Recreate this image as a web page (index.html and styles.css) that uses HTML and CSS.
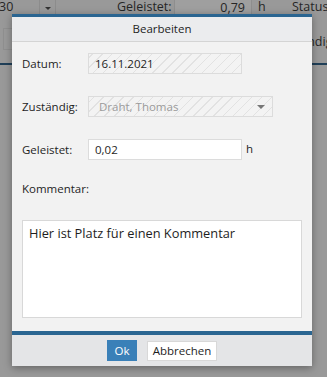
FILE: index.html
```html
<!DOCTYPE html>
<html lang="de">
<head>
    <meta charset="UTF-8">
    <title>Bearbeiten</title>
    <link rel="stylesheet" href="styles.css">
</head>
<body>
<div class="page">
    <div class="page-row">
        <span class="page-num">30</span>
        <span class="page-drop"><span class="page-arrow"></span></span>
        <span class="page-label">Geleistet:</span>
        <span class="page-input">0,79</span>
        <span class="page-unit">h</span>
        <span class="page-status">Status:</span>
    </div>
    <div class="page-row second">
        <span class="page-hatch"></span>
        <span class="page-rest">Zuständig</span>
    </div>
    <div class="page-line"></div>
</div>

<div class="dialog">
    <div class="dialog-head">Bearbeiten</div>
    <div class="dialog-body">
        <div class="field">
            <label>Datum:</label>
            <div class="input disabled date">16.11.2021</div>
        </div>
        <div class="field">
            <label>Zuständig:</label>
            <div class="input disabled select">Draht, Thomas<span class="arrow"></span></div>
        </div>
        <div class="field tight">
            <label>Geleistet:</label>
            <div class="input hours">0,02</div>
            <span class="unit">h</span>
        </div>
        <div class="field last">
            <label>Kommentar:</label>
        </div>
        <div class="comment">Hier ist Platz für einen Kommentar</div>
    </div>
    <div class="dialog-foot">
        <button class="btn primary">Ok</button>
        <button class="btn">Abbrechen</button>
    </div>
</div>
</body>
</html>
```

FILE: styles.css
```css
body {
    margin: 0;
    background: #999;
    font-family: "Open Sans", sans-serif;
    font-size: 11.5px;
    color: #1e1e1e;
    width: 327px;
    height: 377px;
    overflow: hidden;
    position: relative;
}

/* dimmed page behind the dialog */
.page {
    color: #262626;
    font-size: 12.5px;
}
.page-row {
    display: flex;
    align-items: center;
    height: 20px;
    margin-top: -4px;
    white-space: nowrap;
}
.page-row > span {
    flex-shrink: 0;
}
.page-num {
    width: 39px;
    text-indent: -1px;
}
.page-drop {
    width: 15px;
    height: 20px;
    border-left: 1px solid #8c8c8c;
    border-right: 1px solid #8c8c8c;
    display: flex;
    justify-content: center;
    align-items: center;
}
.page-arrow {
    border-left: 3px solid transparent;
    border-right: 3px solid transparent;
    border-top: 3px solid #333;
    margin-top: 4px;
}
.page-label {
    margin-left: 61px;
    width: 57px;
}
.page-input {
    width: 78px;
    height: 20px;
    box-sizing: border-box;
    border: 1px solid #8e8e8e;
    background: #9f9f9f;
    text-align: right;
    padding-right: 6px;
    line-height: 22px;
}
.page-unit {
    margin-left: 6px;
    width: 34px;
}
.second {
    margin-top: 11px;
    height: 23px;
}
.page-hatch {
    width: 30px;
    height: 20px;
    margin-left: 3px;
    border: 1px solid #8f8f8f;
}
.page-rest {
    margin-left: 240px;
    padding-top: 6px;
}
.page-line {
    margin-top: 13px;
    height: 2px;
    background: #1f3f58;
}

/* dialog */
.dialog {
    position: absolute;
    left: 12px;
    top: 14px;
    width: 300px;
    height: 352px;
    display: flex;
    flex-direction: column;
    background: #f2f2f2;
    border-top: 3px solid #2a6591;
    box-sizing: border-box;
    box-shadow: 0 2px 8px rgba(0, 0, 0, 0.35);
}
.dialog-head {
    height: 24px;
    line-height: 24px;
    text-align: center;
    background: #ebecee;
    border-bottom: 1px solid #d4d4d4;
}
.dialog-body {
    flex: 1;
    padding: 11px 10px 12px 10px;
    border-bottom: 4px solid #2a6591;
}
.field {
    display: flex;
    align-items: center;
    height: 21px;
    margin-bottom: 22px;
}
.field.tight {
    margin-bottom: 18px;
}
.field.last {
    margin-bottom: 0;
}
.field label {
    width: 66px;
}
.input {
    height: 21px;
    box-sizing: border-box;
    border: 1px solid #dcdcdc;
    background: #fff;
    padding: 0 6px;
    line-height: 19px;
}
.disabled {
    background: repeating-linear-gradient(-45deg, #f3f3f3 0, #f3f3f3 6px, #e2e2e2 6px, #e2e2e2 7px);
}
.date {
    width: 154px;
}
.select {
    width: 185px;
    padding-left: 10px;
    color: #9a9a9a;
    position: relative;
}
.arrow {
    position: absolute;
    right: 7px;
    top: 8px;
    border-left: 4px solid transparent;
    border-right: 4px solid transparent;
    border-top: 4px solid #777;
}
.hours {
    width: 154px;
}
.unit {
    margin-left: 4px;
    margin-top: -2px;
}
.comment {
    height: 98px;
    box-sizing: border-box;
    margin-top: 21px;
    border: 1px solid #d8d8d8;
    background: #fff;
    padding: 3px 6px;
    font-size: 12.8px;
}
.dialog-foot {
    height: 31px;
    background: #e4e5e7;
    display: flex;
    justify-content: center;
    align-items: center;
    gap: 10px;
}
.btn {
    font-family: "Open Sans", sans-serif;
    font-size: 11.5px;
    height: 20px;
    width: 70px;
    padding: 0;
    border: 1px solid #d8d8d8;
    background: #fff;
    color: #1e1e1e;
    line-height: 18px;
}
.primary {
    background: #3a80b8;
    border-color: #3a80b8;
    color: #fff;
    width: 30px;
    height: 21px;
}
```
